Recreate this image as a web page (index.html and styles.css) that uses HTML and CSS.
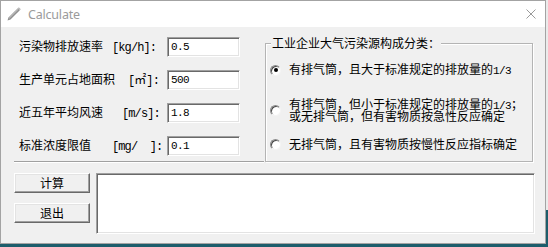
FILE: index.html
```html
<!DOCTYPE html>
<html>
<head>
<meta charset="utf-8">
<link rel="stylesheet" href="styles.css">
</head>
<body>
<div class="window">
  <div class="titlebar">
    <svg class="ico" viewBox="0 0 16 16"><path d="M1.5 14.5 L2.5 11.5 L11.8 2.2 L13.8 4.2 L4.5 13.5 Z" fill="#8f8f8f"/><path d="M3.2 12.2 L12.3 3.1" stroke="#d6d6d6" stroke-width="0.9"/><path d="M11.8 2.2 L12.8 1.2 L14.8 3.2 L13.8 4.2 Z" fill="#b5b5b5"/></svg>
    <span class="title">Calculate</span>
    <svg class="close" viewBox="0 0 10 10"><path d="M0.5 0.5 L9.5 9.5 M9.5 0.5 L0.5 9.5" stroke="#9a9a9a" stroke-width="1"/></svg>
  </div>
  <div class="client">
    <div class="top">
      <div class="fields">
        <div class="row"><span class="label">污染物排放速率<span class="unit u1">[kg/h]:</span></span><div class="input">0.5</div></div>
        <div class="row"><span class="label">生产单元占地面积<span class="unit u2">[<span class="sq">㎡</span>]:</span></span><div class="input">500</div></div>
        <div class="row"><span class="label">近五年平均风速<span class="unit u3">[m/s]:</span></span><div class="input">1.8</div></div>
        <div class="row"><span class="label">标准浓度限值<span class="unit u4">[mg/  ]:</span></span><div class="input">0.1</div></div>
      </div>
      <div class="group">
        <div class="gtitle">工业企业大气污染源构成分类：</div>
        <div class="opt o1"><span class="radio checked"><span class="dot"></span></span><span class="otext">有排气筒，且大于标准规定的排放量的<span class="frac">1/3</span></span></div>
        <div class="opt o2"><span class="radio"></span><span class="otext two"><span class="ln">有排气筒，但小于标准规定的排放量的<span class="frac">1/3</span>；</span><span class="ln">或无排气筒，但有害物质按急性反应确定</span></span></div>
        <div class="opt o3"><span class="radio"></span><span class="otext">无排气筒，且有害物质按慢性反应指标确定</span></div>
      </div>
    </div>
    <div class="bottom">
      <div class="buttons">
        <div class="btn">计算</div>
        <div class="btn">退出</div>
      </div>
      <div class="output"></div>
    </div>
  </div>
</div>
</body>
</html>
```
FILE: styles.css
```css
html, body {
  margin: 0;
  padding: 0;
}
body {
  width: 548px;
  height: 247px;
  overflow: hidden;
  background: linear-gradient(#ebebeb 0 210px, #1d5d6b 210px);
  font-family: "Noto Sans CJK SC", sans-serif;
  font-size: 12px;
  color: #000;
}
.window {
  width: 546px;
  height: 244px;
  box-sizing: border-box;
  border: 1px solid #a3a3a3;
  background: #f0f0f0;
  display: flex;
  flex-direction: column;
}
.titlebar {
  flex: none;
  height: 26px;
  background: #fff;
  display: flex;
  align-items: center;
}
.ico {
  width: 16px;
  height: 16px;
  margin-left: 5px;
  flex: none;
}
.title {
  margin-left: 6px;
  font-family: "Noto Sans", sans-serif;
  font-size: 12.5px;
  color: #9b9b9b;
  letter-spacing: -0.2px;
}
.close {
  width: 10px;
  height: 10px;
  margin-left: auto;
  margin-right: 9px;
}
.client {
  padding: 10px 0 0 13px;
}
.top {
  display: flex;
  align-items: flex-start;
  gap: 1px;
}
.fields {
  width: 250px;
  height: 124px;
  border-bottom: 1px solid #a0a0a0;
  box-shadow: 0 1px 0 #ffffff;
  display: flex;
  flex-direction: column;
  gap: 13px;
}
.row {
  height: 20px;
  display: flex;
  align-items: center;
}
.label {
  flex: none;
  width: 148px;
  padding-left: 5px;
  white-space: pre;
  line-height: 14px;
}
.unit {
  font-family: "Liberation Mono", monospace;
  font-size: 12px;
  letter-spacing: -0.9px;
  white-space: pre;
}
.sq {
  font-family: "Noto Sans CJK SC", sans-serif;
  letter-spacing: 0;
}
.u1 { margin-left: 9px; }
.u2 { margin-left: 13px; }
.u3 { margin-left: 19px; }
.u4 { margin-left: 21px; }
.input {
  flex: none;
  width: 73px;
  height: 20px;
  box-sizing: border-box;
  background: #fff;
  border: 1px solid;
  border-color: #a0a0a0 #ffffff #ffffff #a0a0a0;
  box-shadow: inset 1px 1px 0 #696969, inset -1px -1px 0 #e3e3e3;
  padding: 2px 0 0 3px;
  font-family: "Liberation Mono", monospace;
  font-size: 11px;
  letter-spacing: -0.6px;
  line-height: 14px;
}
.group {
  margin-top: 6px;
  width: 268px;
  height: 119px;
  box-sizing: border-box;
  border: 1px solid #b4b4b4;
  box-shadow: inset 1px 1px 0 #fff, 1px 1px 0 #fff;
  display: flex;
  flex-direction: column;
}
.gtitle {
  align-self: flex-start;
  margin: -8px 0 0 5px;
  padding: 0 1px;
  background: #f0f0f0;
  line-height: 14px;
}
.opt {
  display: flex;
  align-items: center;
  padding-left: 4px;
  gap: 8px;
}
.o1 { margin-top: 12px; }
.o2 { margin-top: 20px; }
.o3 { margin-top: 15px; }
.otext {
  line-height: 14px;
  white-space: nowrap;
}
.otext.two {
  display: flex;
  flex-direction: column;
}
.ln {
  display: block;
  height: 12px;
  line-height: 12px;
}
.frac {
  font-family: "Liberation Mono", monospace;
  font-size: 11px;
  letter-spacing: -0.6px;
}
.radio {
  flex: none;
  width: 11px;
  height: 11px;
  box-sizing: border-box;
  border-radius: 50%;
  background: #fff;
  border: 1px solid;
  border-color: #8a8a8a #f4f4f4 #f4f4f4 #8a8a8a;
  box-shadow: inset 1px 1px 0 #4a4a4a;
  display: flex;
  align-items: center;
  justify-content: center;
}
.dot {
  width: 4px;
  height: 4px;
  border-radius: 50%;
  background: #000;
}
.bottom {
  margin-top: 11px;
  display: flex;
  gap: 6px;
}
.buttons {
  width: 76px;
  display: flex;
  flex-direction: column;
  gap: 10px;
}
.btn {
  height: 20px;
  box-sizing: border-box;
  background: #f0f0f0;
  border: 1px solid;
  border-color: #ffffff #696969 #696969 #ffffff;
  box-shadow: inset -1px -1px 0 #a0a0a0, inset 1px 1px 0 #e3e3e3;
  display: flex;
  align-items: center;
  justify-content: center;
  line-height: 14px;
}
.output {
  width: 439px;
  height: 61px;
  box-sizing: border-box;
  background: #fff;
  border: 1px solid;
  border-color: #a0a0a0 #ffffff #ffffff #a0a0a0;
  box-shadow: inset 1px 1px 0 #696969, inset -1px -1px 0 #e3e3e3;
}
```
